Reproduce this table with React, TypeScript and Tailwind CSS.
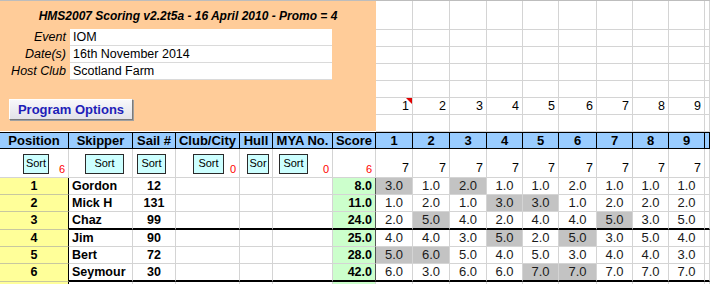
import type { ReactNode } from 'react';

const FONT = "font-['Liberation_Sans',Arial,sans-serif]";
const SHEET_COLS =
  'grid-cols-[69px_64px_43px_64px_33px_60px_43px_37px_37px_37px_36px_36px_38px_36px_36px_36px_5px]';
const RACE_COLS = 'grid-cols-[37px_37px_37px_36px_36px_38px_36px_36px_36px_5px]';

const HEADERS = ['Position', 'Skipper', 'Sail #', 'Club/City', 'Hull', 'MYA No.', 'Score', '1', '2', '3', '4', '5', '6', '7', '8', '9', ''];

interface SortCell {
  btn?: string;
  label?: string;
  red?: string;
}

const SORT_ROW: SortCell[] = [
  { btn: 'w-[26px] ml-[23px]', red: '6' },
  { btn: 'w-[39px] ml-[16px]' },
  { btn: 'w-[29px] ml-[4px]' },
  { btn: 'w-[31px] ml-[17px]', red: '0' },
  { btn: 'w-[22px] ml-[7px]', label: 'Sor' },
  { btn: 'w-[29px] ml-[6px]', red: '0' },
  { red: '6' },
];

interface Result {
  pos: number;
  name: string;
  sail: string;
  score: string;
  races: string[];
  dropped: number[];
}

const RESULTS: Result[] = [
  { pos: 1, name: 'Gordon', sail: '12', score: '8.0', races: ['3.0', '1.0', '2.0', '1.0', '1.0', '2.0', '1.0', '1.0', '1.0'], dropped: [0, 2] },
  { pos: 2, name: 'Mick H', sail: '131', score: '11.0', races: ['1.0', '2.0', '1.0', '3.0', '3.0', '1.0', '2.0', '2.0', '2.0'], dropped: [3, 4] },
  { pos: 3, name: 'Chaz', sail: '99', score: '24.0', races: ['2.0', '5.0', '4.0', '2.0', '4.0', '4.0', '5.0', '3.0', '5.0'], dropped: [1, 6] },
  { pos: 4, name: 'Jim', sail: '90', score: '25.0', races: ['4.0', '4.0', '3.0', '5.0', '2.0', '5.0', '3.0', '5.0', '4.0'], dropped: [3, 5] },
  { pos: 5, name: 'Bert', sail: '72', score: '28.0', races: ['5.0', '6.0', '5.0', '4.0', '5.0', '3.0', '4.0', '4.0', '3.0'], dropped: [0, 1] },
  { pos: 6, name: 'Seymour', sail: '30', score: '42.0', races: ['6.0', '3.0', '6.0', '6.0', '7.0', '7.0', '7.0', '7.0', '7.0'], dropped: [4, 5] },
];

function Field({ label, value }: { label: string; value: string }) {
  return (
    <div className="flex h-[17px]">
      <div className="w-[70px] pr-[4px] text-right italic text-[12.5px] leading-[17px]">{label}</div>
      <div className="w-[262px] bg-white border-b border-[#dadada] pl-[3px] text-[12.5px] leading-[16px]">{value}</div>
    </div>
  );
}

function Cell({ className = '', children }: { className?: string; children?: ReactNode }) {
  return <div className={`border-r border-b border-[#d4d4d4] overflow-hidden whitespace-nowrap ${className}`}>{children}</div>;
}

function Header() {
  return (
    <div className="flex">
      {/* Orange info block */}
      <div className="w-[376px] h-[131px] bg-[#ffcc99] border-t border-[#bdbdbd] flex flex-col">
        <div className="h-[28px] flex items-center justify-center font-bold italic text-[12px] pt-[1px]">
          HMS2007 Scoring v2.2t5a - 16 April 2010 - Promo = 4
        </div>
        <Field label="Event" value="IOM" />
        <Field label="Date(s)" value="16th November 2014" />
        <Field label="Host Club" value="Scotland Farm" />
        <div className="h-[17px]" />
        <div className="pl-[9px]">
          <button className="w-[124px] h-[21px] bg-gradient-to-b from-[#f8f8fa] to-[#e2e2e8] border border-t-white border-l-white border-r-[#7a7a7a] border-b-[#7a7a7a] shadow-[1px_1px_0_#a0a0a0] text-[13px] font-bold text-[#1e1eb8] leading-[19px]">
            Program Options
          </button>
        </div>
      </div>

      {/* Empty sheet area */}
      <div className={`grid ${RACE_COLS} grid-rows-[29px_17px_17px_17px_17px_17px_17px] border-t border-[#bdbdbd]`}>
        {Array.from({ length: 70 }).map((_, i) => {
          const row = Math.floor(i / 10);
          const col = i % 10;
          const label = row === 5 && col < 9 ? String(col + 1) : '';
          return (
            <Cell key={i} className="relative text-right pr-[3px] text-[12.5px] leading-[17px]">
              {label}
              {row === 5 && col === 0 && (
                <svg className="absolute right-0 top-0" width="6" height="6" viewBox="0 0 6 6">
                  <polygon points="0,0 6,0 6,6" fill="#e00000" />
                </svg>
              )}
            </Cell>
          );
        })}
      </div>
    </div>
  );
}

export default function App() {
  return (
    <div className={`w-[710px] h-[284px] overflow-hidden bg-white text-black ${FONT}`}>
      <Header />

      <div className={`grid ${SHEET_COLS}`}>
        {/* Column titles */}
        {HEADERS.map((h, i) => (
          <div
            key={h + i}
            className="h-[17px] bg-[#99ccff] border-t border-b border-r border-black text-center font-bold text-[13px] leading-[15px] overflow-hidden whitespace-nowrap"
          >
            {h}
          </div>
        ))}

        {/* Sort buttons and counts */}
        {SORT_ROW.map((s, i) => (
          <Cell key={'s' + i} className="relative h-[29px] pt-[5px]">
            {s.btn && (
              <div className={`${s.btn} h-[20px] border border-[#2a2a2a] bg-[#ccffff] text-center text-[11px] leading-[17px]`}>
                {s.label ?? 'Sort'}
              </div>
            )}
            {s.red && (
              <span className="absolute right-[3px] bottom-[2px] text-[11px] leading-[12px] text-[#ff0000]">{s.red}</span>
            )}
          </Cell>
        ))}
        {Array.from({ length: 10 }).map((_, i) => (
          <Cell key={'r' + i} className="h-[29px] flex items-end justify-end pr-[3px] pb-[1px] text-[12.5px] leading-[15px]">
            {i < 9 ? '7' : ''}
          </Cell>
        ))}

        {/* Results */}
        {RESULTS.map((r, ri) => {
          const last = ri === 2 || ri === 5;
          const h = last ? 'h-[18px] border-b-2 border-b-black' : 'h-[17px]';
          return [
            <div
              key={'p' + ri}
              className={`bg-[#ffff99] border-r border-r-black border-b border-[#c8c8a0] text-center font-bold text-[12.5px] leading-[16px] ${last ? 'h-[18px]' : 'h-[17px]'}`}
            >
              {r.pos}
            </div>,
            <Cell key={'n' + ri} className={`${h} pl-[3px] font-bold text-[12.5px] leading-[16px]`}>{r.name}</Cell>,
            <Cell key={'sl' + ri} className={`${h} text-center font-bold text-[12.5px] leading-[16px]`}>{r.sail}</Cell>,
            <Cell key={'c' + ri} className={h} />,
            <Cell key={'hu' + ri} className={h} />,
            <Cell key={'m' + ri} className={h} />,
            <Cell key={'sc' + ri} className={`${h} bg-[#ccffcc] border-r-[#555] text-right pr-[3px] font-bold text-[12.5px] leading-[16px]`}>
              {r.score}
            </Cell>,
            ...r.races.map((v, vi) => (
              <Cell
                key={'v' + ri + vi}
                className={`${h} text-center text-[13px] leading-[16px] text-[#1a1a1a] ${r.dropped.includes(vi) ? 'bg-[#c3c3c3]' : ''}`}
              >
                {v}
              </Cell>
            )),
            <Cell key={'e' + ri} className={h} />,
          ];
        })}

        {/* Next (empty) row */}
        <div className="h-[10px] bg-[#ffff99] border-r border-r-black" />
        {Array.from({ length: 16 }).map((_, i) => (
          <Cell key={'x' + i} className={`h-[10px] ${i === 5 ? 'bg-[#ccffcc]' : ''}`} />
        ))}
      </div>
    </div>
  );
}
